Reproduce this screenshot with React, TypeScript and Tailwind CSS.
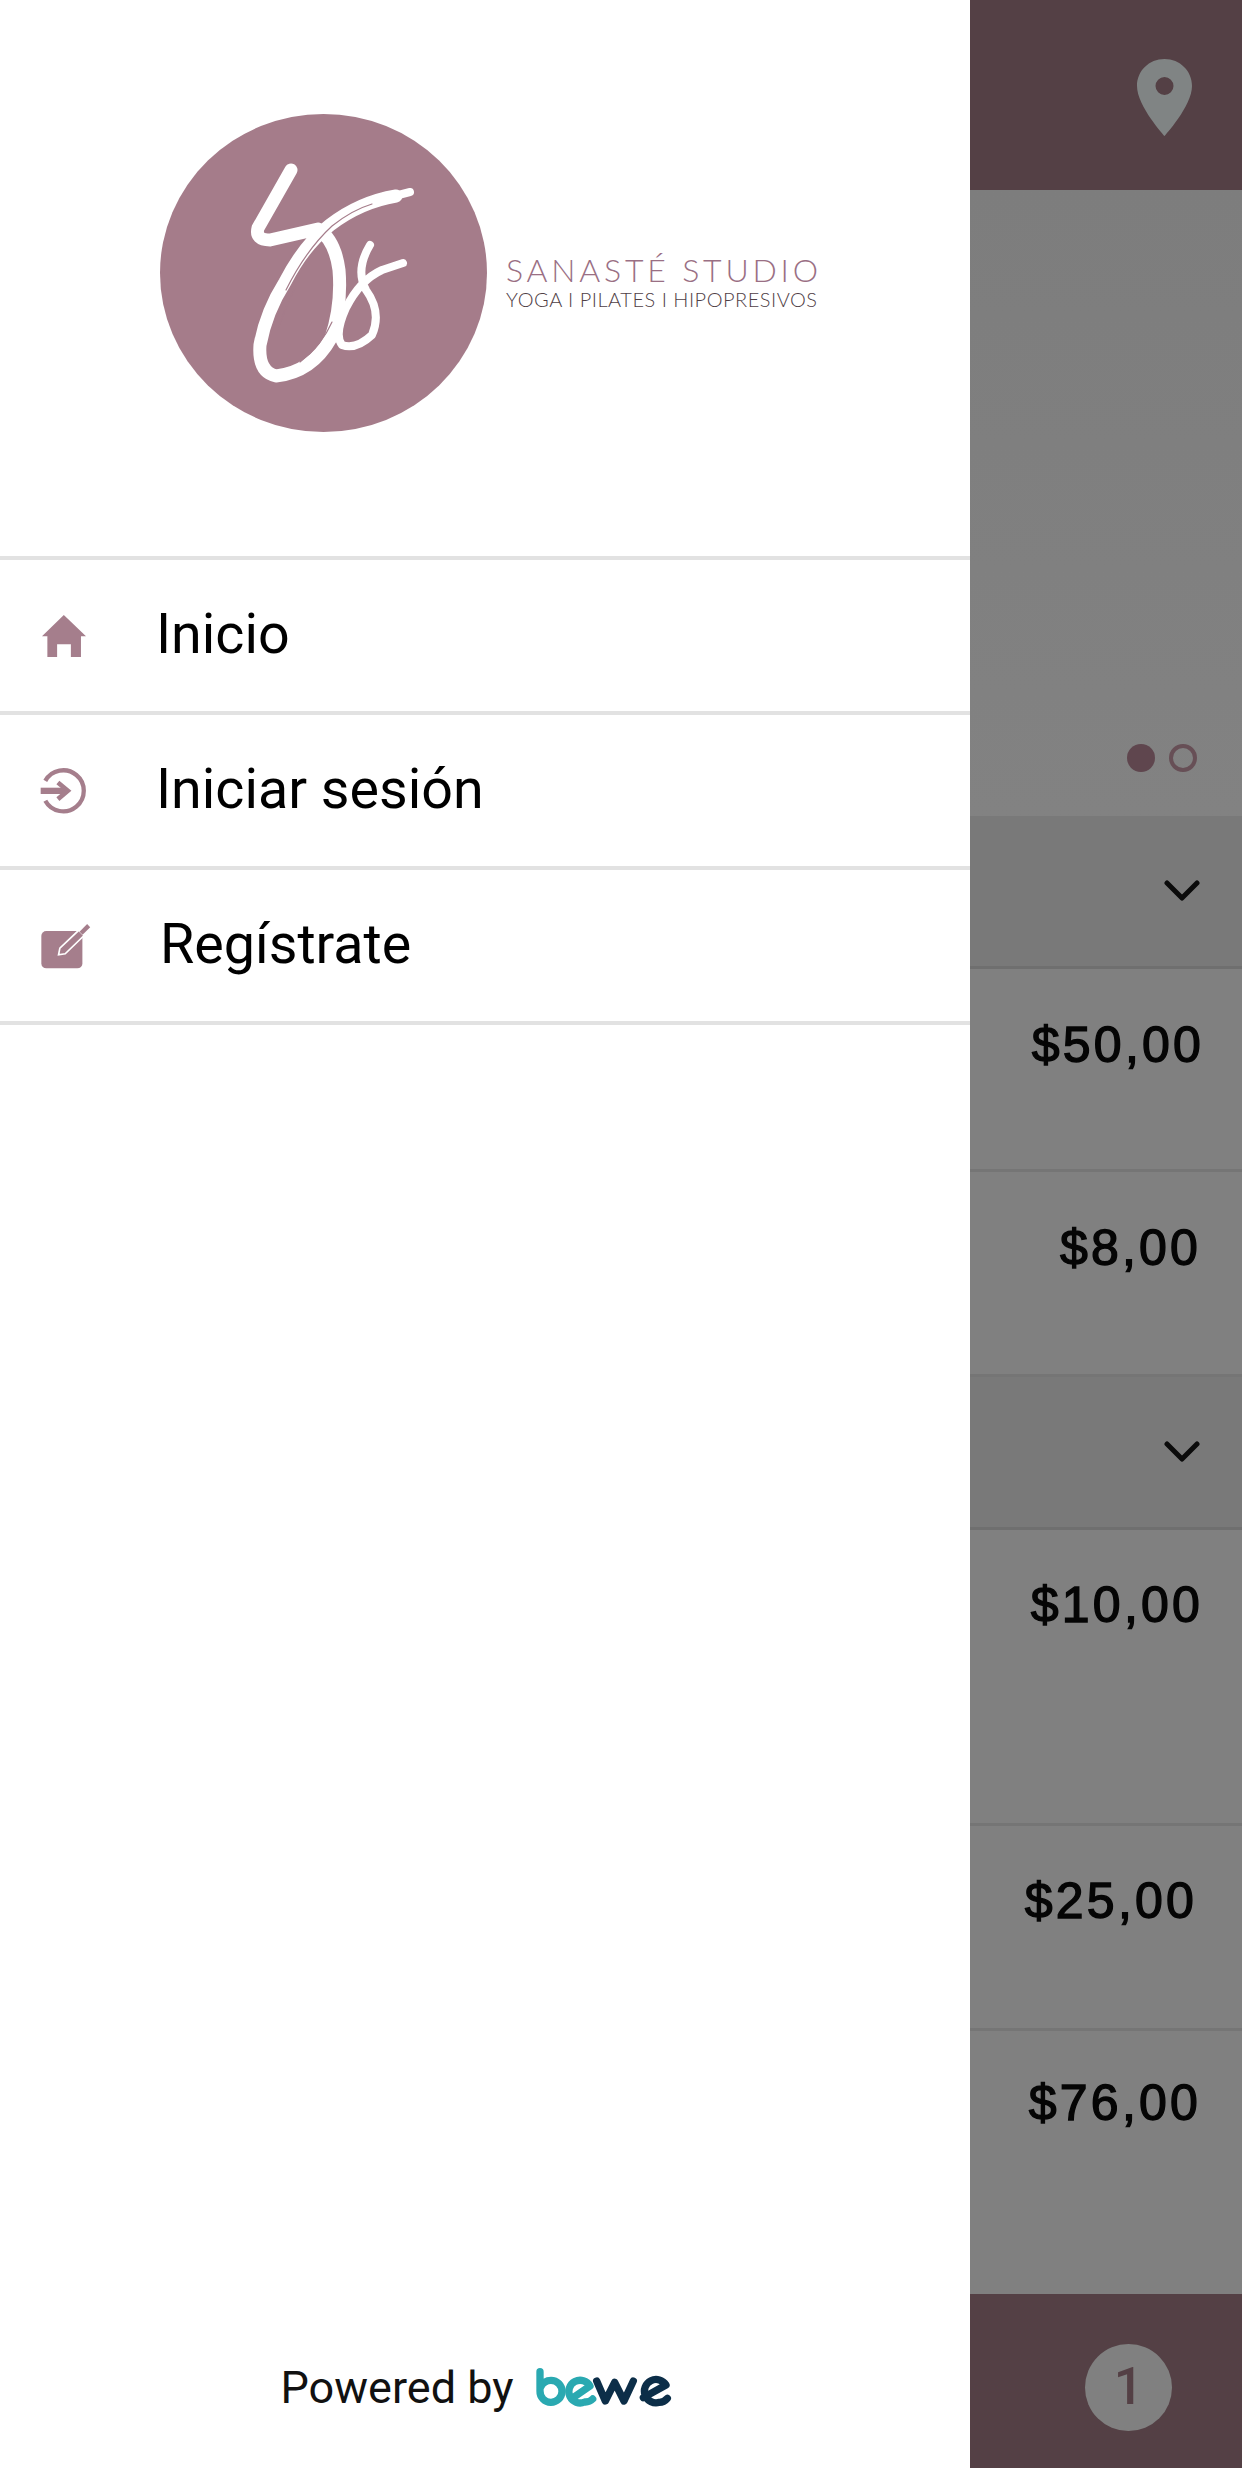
const menuLine = "h-[4px] w-full bg-[#e2e2e2]";

function LogoMark() {
  return (
    <svg viewBox="160 114 327 318" className="h-[318px] w-[327px] shrink-0">
      <ellipse cx="323.5" cy="273" rx="163.5" ry="159" fill="#a57c8a" />
      <g fill="none" stroke="#fff" strokeLinecap="round" strokeLinejoin="round">
        <path
          d="M291 170 L258 228 Q255 240 270 240 L318 229 Q335 240 339 270 Q342 305 331 338 Q312 372 276 376 Q258 372 260 345 Q266 312 285 282 Q304 245 330 225 Q360 202 396 196"
          strokeWidth="13"
        />
        <path d="M330 226 Q360 204 410 192" strokeWidth="8" />
        <path
          d="M370 245 Q355 270 366 290 Q382 312 372 335 Q356 350 342 345 Q334 335 346 308 Q360 280 382 270 L403 263"
          strokeWidth="8"
        />
      </g>
      <g fill="none" stroke="#a57c8a" strokeLinecap="round" strokeWidth="1.2">
        <path d="M286 290 Q306 250 332 226 Q352 210 372 204" />
        <path d="M278 330 Q284 310 296 286" />
        <path d="M300 362 Q322 345 332 322" />
      </g>
    </svg>
  );
}

function HomeIcon() {
  return (
    <svg viewBox="127 225 131 125" className="h-[42px] w-[44px]">
      <polygon
        points="192,225 258,288 243,288 243,350 213,350 213,312 172,312 172,350 143,350 143,288 127,288"
        fill="#a57e8c"
      />
    </svg>
  );
}

function LoginIcon() {
  return (
    <svg viewBox="120 680 145 142" className="h-[47px] w-[48px]" fill="none" stroke="#a57e8c">
      <path d="M136 722 A62 62 0 1 1 136 782" strokeWidth="13" />
      <path d="M122 752 H198" strokeWidth="19" />
      <path d="M174 727 L204 752 L174 777" strokeWidth="14" />
    </svg>
  );
}

function EditIcon() {
  return (
    <svg viewBox="120 1145 155 145" className="h-[48px] w-[52px]">
      <rect x="123" y="1172" width="124" height="113" rx="15" fill="#a57e8c" />
      <path
        d="M175 1244 L179 1224 L236 1170 L252 1186 L195 1241 Z"
        fill="#a57e8c"
        stroke="#fff"
        strokeWidth="5"
      />
      <path d="M243 1179 L266 1156" stroke="#a57e8c" strokeWidth="13" />
    </svg>
  );
}

function BeweLogo() {
  return (
    <svg
      viewBox="0 0 480 180"
      className="mb-[4px] h-[60px] w-[160px]"
      fill="none"
      strokeWidth="22"
      strokeLinecap="round"
      strokeLinejoin="round"
    >
      <path d="M42 50 V108 A33 33 0 1 0 75 76 C62 76 50 84 44 96" stroke="#2aa9b1" />
      <path d="M141 128 L192 93 A34 34 0 1 0 176 141 Q190 142 200 132" stroke="#2aa9b1" />
      <path d="M212 78 L238 138 L266 82 L294 138 L322 78" stroke="#0c2e48" />
      <path d="M352 128 L420 90 A35 35 0 1 0 400 142 Q414 142 424 130" stroke="#0c2e48" />
    </svg>
  );
}

function Drawer() {
  const items = [
    { label: "Inicio", icon: <HomeIcon />, iconBox: "w-[156px] pl-[42px]" },
    { label: "Iniciar sesión", icon: <LoginIcon />, iconBox: "w-[156px] pl-[40px]" },
    { label: "Regístrate", icon: <EditIcon />, iconBox: "w-[160px] pl-[40px]" },
  ];

  return (
    <div className="flex h-full w-[970px] shrink-0 flex-col bg-white">
      <div className="flex h-[556px] items-start pl-[160px] pt-[114px]">
        <LogoMark />
        <div className="ml-[19px] mt-[138px] flex w-[320px] flex-col font-['Lato',sans-serif]">
          <span className="whitespace-nowrap text-[32px] leading-[36px] font-light tracking-[3.8px] text-[#9a6f84]">
            SANASTÉ STUDIO
          </span>
          <span className="whitespace-nowrap text-[20px] leading-[22px] font-light tracking-[0.5px] text-[#4f4046]">
            YOGA I PILATES I HIPOPRESIVOS
          </span>
        </div>
      </div>
      <div className={menuLine} />
      {items.map((item) => (
        <div key={item.label}>
          <div className="flex h-[151px] items-center">
            <div className={item.iconBox}>{item.icon}</div>
            <span className="mb-[2px] font-['Roboto',sans-serif] text-[55.6px] leading-none text-black">
              {item.label}
            </span>
          </div>
          <div className={menuLine} />
        </div>
      ))}
      <div className="mt-auto flex h-[174px] items-center justify-center pt-[12px] pr-[4px]">
        <div className="flex items-center gap-[12px]">
          <span className="font-['Roboto',sans-serif] text-[45px] leading-none text-[#111]">
            Powered by
          </span>
          <BeweLogo />
        </div>
      </div>
    </div>
  );
}

function Chevron() {
  return (
    <svg
      viewBox="0 0 36 22"
      className="h-[22px] w-[36px]"
      fill="none"
      stroke="#0b0b0b"
      strokeWidth="5"
      strokeLinecap="round"
      strokeLinejoin="round"
    >
      <path d="M3 3 L18 18 L33 3" />
    </svg>
  );
}

function SectionRow() {
  return (
    <div className="flex h-[153px] items-center justify-end border-b-[3px] border-[#6f6f6f] bg-[#797979] pr-[42px]">
      <Chevron />
    </div>
  );
}

function PriceRow({ price, rowClass }: { price: string; rowClass: string }) {
  return (
    <div className={`flex justify-end ${rowClass}`}>
      <span className="font-['Liberation_Sans',sans-serif] text-[50px] leading-none tracking-[3.2px] text-[#050505] [-webkit-text-stroke:1.4px_#050505]">
        {price}
      </span>
    </div>
  );
}

function Backdrop() {
  return (
    <div className="flex h-full min-w-0 flex-1 flex-col bg-[#808080]">
      <div className="flex h-[190px] items-start justify-end bg-[#544045] pr-[50px] pt-[59px]">
        <svg viewBox="0 0 55 77" className="h-[77px] w-[55px]">
          <path
            fillRule="evenodd"
            d="M27.5 0 C12 0 0 12 0 27 C0 47 27.5 77 27.5 77 C27.5 77 55 47 55 27 C55 12 43 0 27.5 0 Z M27.5 18 A9 9 0 1 1 27.5 36 A9 9 0 1 1 27.5 18 Z"
            fill="#808484"
          />
        </svg>
      </div>
      <div className="flex h-[626px] items-end justify-end gap-[14px] bg-gradient-to-b from-[#7d7d7d] to-[#828282] pb-[44px] pr-[45px]">
        <div className="h-[28px] w-[28px] rounded-full bg-[#5f464e]" />
        <div className="h-[28px] w-[28px] rounded-full border-[4px] border-[#674f56]" />
      </div>
      <SectionRow />
      <PriceRow price="$50,00" rowClass="h-[203px] border-b-[3px] border-[#757575] pr-[38px] pt-[51px]" />
      <PriceRow price="$8,00" rowClass="h-[205px] border-b-[3px] border-[#757575] pr-[41px] pt-[51px]" />
      <SectionRow />
      <PriceRow price="$10,00" rowClass="h-[296px] border-b-[3px] border-[#757575] pr-[39px] pt-[50px]" />
      <PriceRow price="$25,00" rowClass="h-[205px] border-b-[3px] border-[#757575] pr-[45px] pt-[50px]" />
      <PriceRow price="$76,00" rowClass="h-[263px] pr-[41px] pt-[47px]" />
      <div className="flex flex-1 items-center justify-end bg-[#544045] pr-[70px] pt-[12px]">
        <div className="flex h-[87px] w-[87px] items-center justify-center rounded-full bg-[#808080] font-['Roboto',sans-serif] text-[52px] font-medium leading-none text-[#544045]">
          1
        </div>
      </div>
    </div>
  );
}

export default function App() {
  return (
    <div className="flex h-[2468px] w-[1242px] overflow-hidden">
      <Drawer />
      <Backdrop />
    </div>
  );
}
